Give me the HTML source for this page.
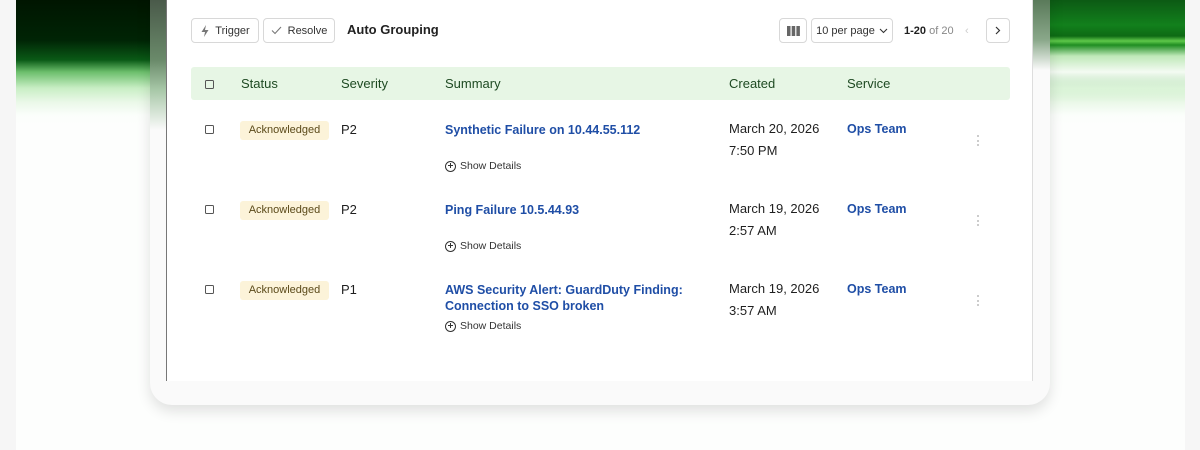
<!DOCTYPE html>
<html><head><style>
*{box-sizing:border-box;margin:0;padding:0}
body{width:1200px;height:450px;overflow:hidden;background:#f6f6f6;font-family:"Liberation Sans",sans-serif;position:relative}
.bgwrap{position:absolute;left:16px;top:0;width:1169px;height:450px;background:#fdfefd;overflow:hidden}
.grad{position:absolute;left:0;top:0;width:1169px;height:125px;background:linear-gradient(180deg,#001500 0px,#002405 40px,#0a5a16 60px,#6cbf6c 72px,#c8eec4 88px,#eaf8e8 102px,#fbfefb 115px,rgba(255,255,255,0) 125px)}
.grad2{position:absolute;right:0;top:0;width:135px;height:110px;background:linear-gradient(180deg,#0c5a14 0px,#12801c 25px,#0d6a14 36px,#5ec84a 41px,#1f8d22 45px,#bfe8b8 56px,#f4fbf3 72px,rgba(255,255,255,0) 100px)}
.card{position:absolute;left:150px;top:-30px;width:900px;height:435px;background:#fafafa;border-radius:22px;box-shadow:0 6px 14px rgba(0,0,0,.12)}
.grad3{position:absolute;left:150px;top:0;width:16px;height:130px;background:linear-gradient(180deg,#4a5a4a,#6a8a6a 60px,#a8c8a8 90px,rgba(250,250,250,0) 130px)}
.grad4{position:absolute;left:1033px;top:0;width:17px;height:70px;background:linear-gradient(180deg,#5a7a5a,#8aa88a 40px,rgba(250,250,250,0) 70px)}
.panel{position:absolute;left:166px;top:0;width:867px;height:381px;background:#fff;border-left:1.5px solid #777;border-right:1px solid #ddd}
.btn{position:absolute;top:18px;height:25px;border:1px solid #d8d8d8;border-radius:4px;font-size:11px;color:#333;display:flex;align-items:center;justify-content:center;background:#fff}
.t{position:absolute;font-size:13px;color:#1f1f1f}
.hdr{position:absolute;left:191px;top:67px;width:819px;height:33px;background:#e7f6e5;border-radius:3px}
.h{position:absolute;top:76px;font-size:13px;color:#1e4a22}
.cb{position:absolute;width:9px;height:9px;border:1.2px solid #555;border-radius:1.5px;left:205px}
.ack{position:absolute;left:240px;height:19px;width:89px;background:#fcf3d9;border-radius:3px;font-size:11px;color:#5b4a1a;text-align:center;line-height:19px}
.lnk{position:absolute;left:445px;font-size:12.5px;color:#1f4ea6;font-weight:bold;line-height:16px}
.sd{position:absolute;left:445px;font-size:10.5px;color:#333;display:flex;align-items:center;gap:4px}
.sd i{display:inline-block;width:11px;height:11px;border:1.2px solid #333;border-radius:50%;position:relative}
.sd i:before{content:"";position:absolute;left:2px;top:3.6px;width:5px;height:1.2px;background:#333}
.sd i:after{content:"";position:absolute;left:3.9px;top:1.7px;width:1.2px;height:5px;background:#333}
.dots{position:absolute;left:977px;width:3px;font-size:0}
.dots b{display:block;width:2px;height:2px;background:#ccc;margin-bottom:2.5px}
.dt{position:absolute;left:729px;font-size:13px;color:#1f1f1f;line-height:22px}
</style></head><body>
<div class="bgwrap"><div class="grad"></div><div class="grad2"></div></div>
<div class="card"></div>
<div class="grad3"></div><div class="grad4"></div>
<div class="panel"></div>
<div class="btn" style="left:191px;width:68px"><svg width="10" height="12" viewBox="0 0 10 12" style="margin-right:5px"><path d="M6 0L1.5 7H5L4 12L8.5 5H5Z" fill="#777"/></svg>Trigger</div>
<div class="btn" style="left:263px;width:72px"><svg width="11" height="9" viewBox="0 0 11 9" style="margin-right:6px"><path d="M1 4.5L4 7.5L10 1" stroke="#777" fill="none" stroke-width="1.1"/></svg>Resolve</div>
<div class="t" style="left:347px;top:22px;font-weight:bold;color:#222">Auto Grouping</div>
<div class="btn" style="left:779px;width:28px"><svg width="13" height="10"><rect x="0" y="0" width="3.5" height="10" fill="#666"/><rect x="4.7" y="0" width="3.5" height="10" fill="#666"/><rect x="9.4" y="0" width="3.5" height="10" fill="#666"/></svg></div>
<div class="btn" style="left:811px;width:82px">10 per page <svg width="9" height="6" style="margin-left:4px"><path d="M1 1L4.5 4.5L8 1" stroke="#333" fill="none" stroke-width="1.1"/></svg></div>
<div class="t" style="left:904px;top:25px;font-size:11px"><b>1-20</b> <span style="color:#888">of 20</span></div>
<div style="position:absolute;left:965px;top:25px;color:#ccc;font-size:11px">‹</div>
<div class="btn" style="left:986px;width:24px"><svg width="6" height="9"><path d="M1 1L4.5 4.5L1 8" stroke="#333" fill="none" stroke-width="1.2"/></svg></div>
<div class="hdr"></div>
<div class="cb" style="top:80px"></div>
<div class="h" style="left:241px">Status</div>
<div class="h" style="left:341px">Severity</div>
<div class="h" style="left:445px">Summary</div>
<div class="h" style="left:729px">Created</div>
<div class="h" style="left:847px">Service</div>

<div class="cb" style="top:125px"></div>
<div class="ack" style="top:121px">Acknowledged</div>
<div class="t" style="left:341px;top:122px">P2</div>
<div class="lnk" style="top:122px">Synthetic Failure on 10.44.55.112</div>
<div class="sd" style="top:160px"><i></i>Show Details</div>
<div class="dt" style="top:118px">March 20, 2026<br>7:50 PM</div>
<div class="lnk" style="left:847px;top:121px">Ops Team</div>
<div class="dots" style="top:135px"><b></b><b></b><b></b></div>

<div class="cb" style="top:205px"></div>
<div class="ack" style="top:201px">Acknowledged</div>
<div class="t" style="left:341px;top:202px">P2</div>
<div class="lnk" style="top:202px">Ping Failure 10.5.44.93</div>
<div class="sd" style="top:240px"><i></i>Show Details</div>
<div class="dt" style="top:198px">March 19, 2026<br>2:57 AM</div>
<div class="lnk" style="left:847px;top:201px">Ops Team</div>
<div class="dots" style="top:215px"><b></b><b></b><b></b></div>

<div class="cb" style="top:285px"></div>
<div class="ack" style="top:281px">Acknowledged</div>
<div class="t" style="left:341px;top:282px">P1</div>
<div class="lnk" style="top:282px">AWS Security Alert: GuardDuty Finding:<br>Connection to SSO broken</div>
<div class="sd" style="top:320px"><i></i>Show Details</div>
<div class="dt" style="top:278px">March 19, 2026<br>3:57 AM</div>
<div class="lnk" style="left:847px;top:281px">Ops Team</div>
<div class="dots" style="top:295px"><b></b><b></b><b></b></div>
</body></html>
